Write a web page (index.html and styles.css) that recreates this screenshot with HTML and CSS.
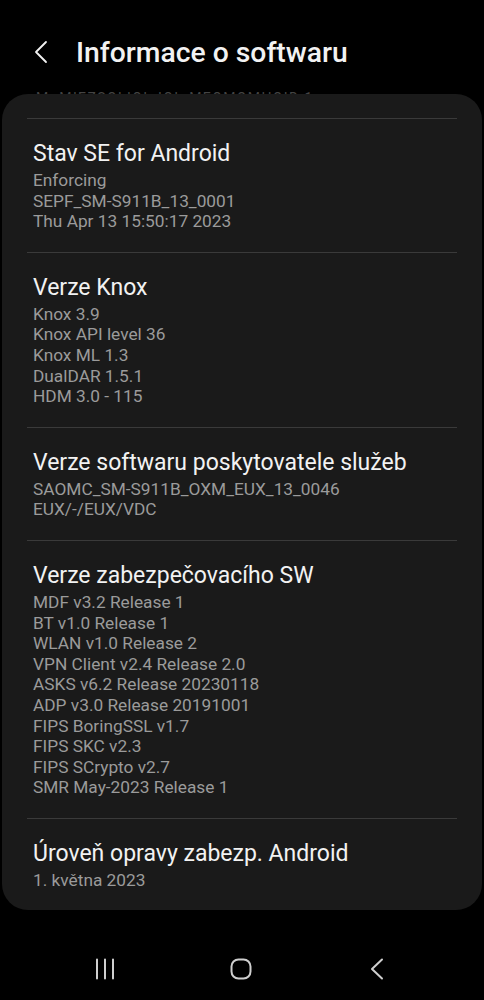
FILE: index.html
```html
<!DOCTYPE html>
<html lang="cs">
<head>
    <meta charset="UTF-8">
    <meta name="viewport" content="width=device-width, initial-scale=1.0">
    <title>Informace o softwaru</title>
    <link rel="stylesheet" href="styles.css">
</head>
<body>
    <header class="app-bar">
        <svg class="back" width="16" height="24" viewBox="0 0 16 24">
            <path d="M13 2 L3 12 L13 22" fill="none" stroke="#f2f2f2" stroke-width="1.8" stroke-linecap="round" stroke-linejoin="round"/>
        </svg>
        <h1>Informace o softwaru</h1>
    </header>

    <div class="peek"><span>M: MIEZSOLIOI: IOI: MEOMOMHOID 1</span></div>

    <main class="card">
        <section class="item">
            <h2>Stav SE for Android</h2>
            <p>Enforcing</p>
            <p>SEPF_SM-S911B_13_0001</p>
            <p>Thu Apr 13 15:50:17 2023</p>
        </section>
        <section class="item">
            <h2>Verze Knox</h2>
            <p>Knox 3.9</p>
            <p>Knox API level 36</p>
            <p>Knox ML 1.3</p>
            <p>DualDAR 1.5.1</p>
            <p>HDM 3.0 - 115</p>
        </section>
        <section class="item">
            <h2>Verze softwaru poskytovatele služeb</h2>
            <p>SAOMC_SM-S911B_OXM_EUX_13_0046</p>
            <p>EUX/-/EUX/VDC</p>
        </section>
        <section class="item">
            <h2>Verze zabezpečovacího SW</h2>
            <p>MDF v3.2 Release 1</p>
            <p>BT v1.0 Release 1</p>
            <p>WLAN v1.0 Release 2</p>
            <p>VPN Client v2.4 Release 2.0</p>
            <p>ASKS v6.2 Release 20230118</p>
            <p>ADP v3.0 Release 20191001</p>
            <p>FIPS BoringSSL v1.7</p>
            <p>FIPS SKC v2.3</p>
            <p>FIPS SCrypto v2.7</p>
            <p>SMR May-2023 Release 1</p>
        </section>
        <section class="item">
            <h2>Úroveň opravy zabezp. Android</h2>
            <p>1. května 2023</p>
        </section>
    </main>

    <nav class="nav-bar">
        <svg width="22" height="22" viewBox="0 0 22 22">
            <path d="M3 1.5 V20.5 M11 1.5 V20.5 M19 1.5 V20.5" stroke="#cfcfcf" stroke-width="2" stroke-linecap="round"/>
        </svg>
        <svg width="22" height="22" viewBox="0 0 22 22">
            <rect x="1.5" y="1.5" width="19" height="19" rx="7" fill="none" stroke="#cfcfcf" stroke-width="2"/>
        </svg>
        <svg width="22" height="22" viewBox="0 0 22 22">
            <path d="M16 1.5 L6 11 L16 20.5" fill="none" stroke="#cfcfcf" stroke-width="2" stroke-linecap="round" stroke-linejoin="round"/>
        </svg>
    </nav>
</body>
</html>
```

FILE: styles.css
```css
body {
    margin: 0;
    background-color: #000;
    color: #f2f2f2;
    font-family: Roboto, "Noto Sans", sans-serif;
    width: 484px;
}
.app-bar {
    display: flex;
    align-items: center;
    height: 44px;
    padding-top: 30px;
}
.back {
    margin-left: 33px;
}
.app-bar h1 {
    margin: 0 0 0 27px;
    font-size: 28.3px;
    font-weight: 500;
}
.peek {
    height: 20px;
    overflow: hidden;
    display: flex;
    align-items: flex-end;
    padding-left: 36px;
}
.peek span {
    display: block;
    height: 3px;
    overflow: hidden;
    font-size: 14px;
    line-height: 14px;
    color: #444;
    letter-spacing: 1.4px;
}
.card {
    margin: 0 2px;
    background-color: #1a1a1a;
    border-radius: 26px;
    padding: 24px 25px 0;
}
.item {
    border-top: 1px solid #3a3a3a;
    padding: 22px 6px 20px;
}
.item h2 {
    margin: 0 0 3px;
    font-size: 23px;
    line-height: 26px;
    font-weight: 400;
    color: #f2f2f2;
}
.item p {
    margin: 0;
    font-size: 17.3px;
    line-height: 20.6px;
    color: #9b9b9b;
}
.nav-bar {
    display: flex;
    justify-content: space-between;
    padding: 48px 96px 0 94px;
}
```
